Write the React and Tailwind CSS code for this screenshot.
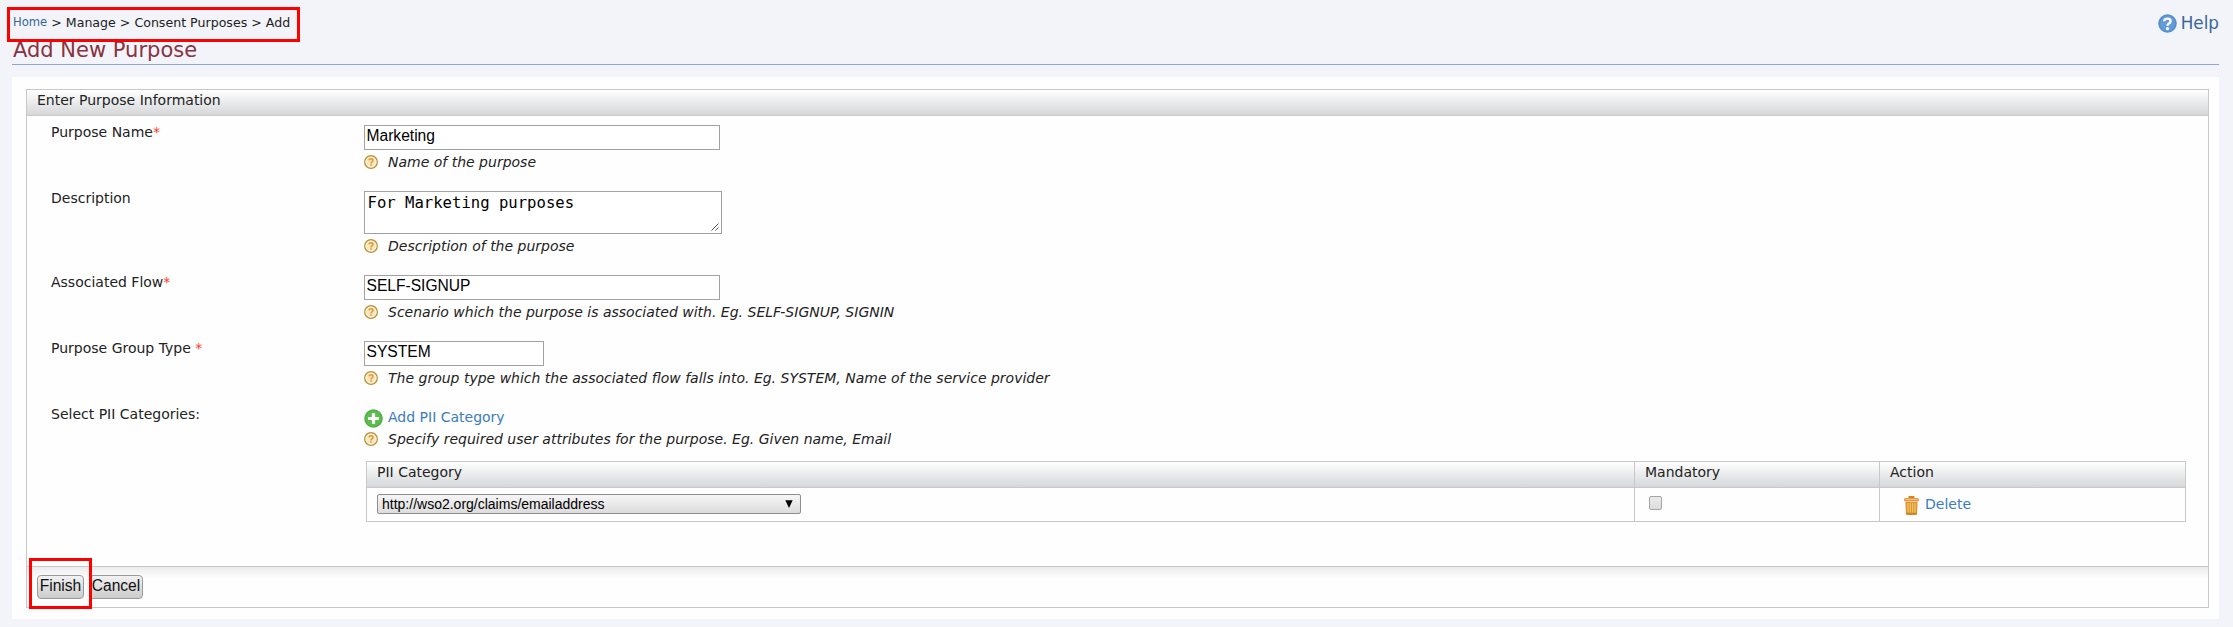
import React from "react";

function HintIcon() {
  return (
    <svg className="mt-[3px] h-[14px] w-[14px] shrink-0" viewBox="0 0 14 14">
      <circle cx="7" cy="7" r="6.3" fill="#f6e9bf" stroke="#b9923a" strokeWidth="1.4" />
      <circle cx="7" cy="7" r="5.1" fill="none" stroke="#fdf8e6" strokeWidth="0.8" />
      <path d="M5 5.4Q5.1 3.7 7 3.7Q9 3.7 9 5.3Q9 6.3 7.9 6.9Q7 7.4 7 8.5" fill="none" stroke="#e39436" strokeWidth="1.5" />
      <rect x="6.2" y="9.3" width="1.6" height="1.5" fill="#e39436" />
    </svg>
  );
}

function Hint({ children }) {
  return (
    <div className="flex h-5 gap-[10px] text-[14px] leading-5 italic">
      <HintIcon />
      <span>{children}</span>
    </div>
  );
}

function Row({ label, required, className, children }) {
  return (
    <div className={"flex " + className}>
      <div className="w-[313px] shrink-0 pt-[6px] leading-5">
        {label}
        {required && <span className="text-[#ff3a1c]">*</span>}
      </div>
      <div className="flex min-w-0 flex-1 flex-col pt-[9px]">{children}</div>
    </div>
  );
}

function TextBox({ value, className }) {
  return (
    <div
      className={
        "h-[25px] border border-[#a2a2a2] bg-white pl-[1.5px] font-['Liberation_Sans',sans-serif] text-[15.6px] leading-[19px] text-black " +
        className
      }
    >
      {value}
    </div>
  );
}

const headCell = "h-[25px] border-[#c8c8c8] bg-linear-to-b from-white to-[#d5d7d9] leading-5";

export default function App() {
  return (
    <div className="relative flex h-[627px] w-[2233px] flex-col overflow-hidden bg-[#f3f4fa] pr-[14px] pl-3 font-['DejaVu_Sans',sans-serif] text-[14px] text-[#222]">
      <header className="flex h-[65px] justify-between border-b border-[#8fa5d2]">
        <div className="flex flex-col">
          <div className="flex h-[38px] items-baseline pt-[14px] pl-px text-[12.6px] leading-[18px] whitespace-pre">
            <span className="relative -top-px text-[11.6px] text-[#386698]">Home</span>
            <span>{" > Manage > Consent Purposes > Add"}</span>
          </div>
          <h1 className="pl-px text-[21px] leading-[24px] text-[#893240]">Add New Purpose</h1>
        </div>
        <div className="flex gap-[4px] pt-[14px]">
          <svg className="h-[19px] w-[19px]" viewBox="0 0 19 19">
            <circle cx="9.5" cy="9.5" r="9.3" fill="#5291cf" />
            <circle cx="9.5" cy="9.5" r="7.4" fill="#659bd6" />
            <path d="M6.2 7.2Q6.3 4.6 9.6 4.6Q12.6 4.6 12.6 7Q12.6 8.5 11 9.5Q9.5 10.4 9.5 11.8" fill="none" stroke="#fff" strokeWidth="2.4" />
            <circle cx="9.5" cy="14.6" r="1.6" fill="#fff" />
          </svg>
          <span className="-mt-[3px] text-[16.8px] leading-6 text-[#386698]">Help</span>
        </div>
      </header>

      <main className="mt-3 flex h-[542px] flex-col bg-[#fefefe] pt-3 pr-[10px] pl-[14px]">
        <section className="flex h-[519px] flex-col border border-[#c8c8c8]">
          <h2 className="h-[26px] border-b border-[#c8c8c8] bg-linear-to-b from-white to-[#d5d7d9] pl-[10px] leading-5">
            Enter Purpose Information
          </h2>
          <div className="flex h-[450px] flex-col pr-[22px] pl-6">
            <Row label="Purpose Name" required className="h-[66px]">
              <TextBox value="Marketing" className="w-[356px]" />
              <div className="mt-[2px]"><Hint>Name of the purpose</Hint></div>
            </Row>
            <Row label="Description" className="h-[84px]">
              <div className="flex h-[43px] w-[358px] items-end justify-between border border-[#a2a2a2] bg-white font-['DejaVu_Sans_Mono',monospace] text-[15.6px] text-black">
                <span className="self-start pl-[2.5px] leading-[23px]">For Marketing purposes</span>
                <svg className="mr-[2px] mb-[2px] h-[8px] w-[8px]" viewBox="0 0 8 8">
                  <path d="M0.5 7.5L7.5 0.5M4.5 7.5L7.5 4.5" stroke="#555" strokeWidth="1" />
                </svg>
              </div>
              <div className="mt-[2px]"><Hint>Description of the purpose</Hint></div>
            </Row>
            <Row label="Associated Flow" required className="h-[66px]">
              <TextBox value="SELF-SIGNUP" className="w-[356px]" />
              <div className="mt-[2px]"><Hint>Scenario which the purpose is associated with. Eg. SELF-SIGNUP, SIGNIN</Hint></div>
            </Row>
            <Row label="Purpose Group Type " required className="h-[66px]">
              <TextBox value="SYSTEM" className="w-[180px]" />
              <div className="mt-[2px]"><Hint>The group type which the associated flow falls into. Eg. SYSTEM, Name of the service provider</Hint></div>
            </Row>
            <Row label="Select PII Categories:" className="h-[168px]">
              <div className="flex h-[22px] gap-[5px]">
                <svg className="mt-[2px] h-[19px] w-[19px]" viewBox="0 0 19 19">
                  <circle cx="9.5" cy="9.5" r="9.3" fill="#4fb04a" />
                  <circle cx="9.5" cy="9.5" r="7.8" fill="#5fba50" />
                  <path d="M9.5 4.2V14.8M4.2 9.5H14.8" stroke="#fff" strokeWidth="3.2" />
                </svg>
                <span className="leading-5 text-[#3a7cbd]">Add PII Category</span>
              </div>
              <Hint>Specify required user attributes for the purpose. Eg. Given name, Email</Hint>
              <div className="mt-3 ml-[2px] grid h-[61px] w-[1820px] grid-cols-[1267px_245px_306px] grid-rows-[25px_34px] border border-[#c8c8c8]">
                <div className={headCell + " pl-[10px]"}>PII Category</div>
                <div className={headCell + " border-l pl-[10px]"}>Mandatory</div>
                <div className={headCell + " border-l pl-[10px]"}>Action</div>
                <div className="border-t border-[#c8c8c8] pt-[6px] pl-[10px]">
                  <div className="flex h-5 w-[424px] items-center justify-between rounded-[2px] border border-[#8e8e8e] bg-linear-to-b from-[#f6f6f6] to-[#dcdcdc] pr-[7px] pl-[4px] font-['Liberation_Sans',sans-serif] text-[14px] leading-[18px] text-black">
                    <span>http://wso2.org/claims/emailaddress</span>
                    <svg className="h-[8px] w-[8px]" viewBox="0 0 8 8"><path d="M0.3 0.3H7.7L4 8Z" fill="#000" /></svg>
                  </div>
                </div>
                <div className="border-t border-l border-[#c8c8c8] pt-[8px] pl-[14px]">
                  <div className="h-[14px] w-[13px] rounded-[2px] border border-[#a4a4a4] bg-linear-to-b from-[#ececec] to-[#dcdcdc]" />
                </div>
                <div className="flex gap-[6px] border-t border-l border-[#c8c8c8] pt-[8px] pl-[24px]">
                  <svg className="h-[19px] w-[15px]" viewBox="0 0 15 19">
                    <rect x="4.5" y="0" width="6" height="3" rx="0.8" fill="#d98218" />
                    <rect x="0.2" y="2" width="14.6" height="3.6" rx="1.2" fill="#e5983f" />
                    <path d="M1.2 3.4H13.8" stroke="#f3c289" strokeWidth="1" />
                    <path d="M1.4 6H13.6L13.1 17.6Q13 19 11.8 19H3.2Q2 19 1.9 17.6Z" fill="#db9534" />
                    <path d="M4 7V16.5M6.3 7V16.5M8.7 7V16.5M11 7V16.5" stroke="#f0c766" strokeWidth="1.2" />
                    <path d="M2.2 17.8H12.8" stroke="#d08022" strokeWidth="1.4" />
                  </svg>
                  <span className="-mt-[2px] leading-5 text-[#3a7cbd]">Delete</span>
                </div>
              </div>
            </Row>
          </div>
          <footer className="flex flex-1 gap-[5px] border-t border-[#c8c8c8] bg-linear-to-b from-[#ececec] to-[#fefefe] to-[12px] pt-2 pl-[10px]">
            <button className="h-6 w-[47px] rounded-[4px] border border-[#9a9a9a] bg-linear-to-b from-[#f2f2f2] to-[#cccccc] pb-[2px] font-['Liberation_Sans',sans-serif] text-[15.6px] leading-[20px] text-[#111]">
              Finish
            </button>
            <button className="h-6 w-[54px] rounded-[4px] border border-[#9a9a9a] bg-linear-to-b from-[#f2f2f2] to-[#cccccc] pb-[2px] font-['Liberation_Sans',sans-serif] text-[15.6px] leading-[20px] text-[#111]">
              Cancel
            </button>
          </footer>
        </section>
      </main>

      <div className="absolute top-[7px] left-[7px] h-[35px] w-[293px] border-[3px] border-[#ff0000]" />
      <div className="absolute top-[558px] left-[29px] h-[51px] w-[63px] border-[3px] border-[#ff0000]" />
    </div>
  );
}
